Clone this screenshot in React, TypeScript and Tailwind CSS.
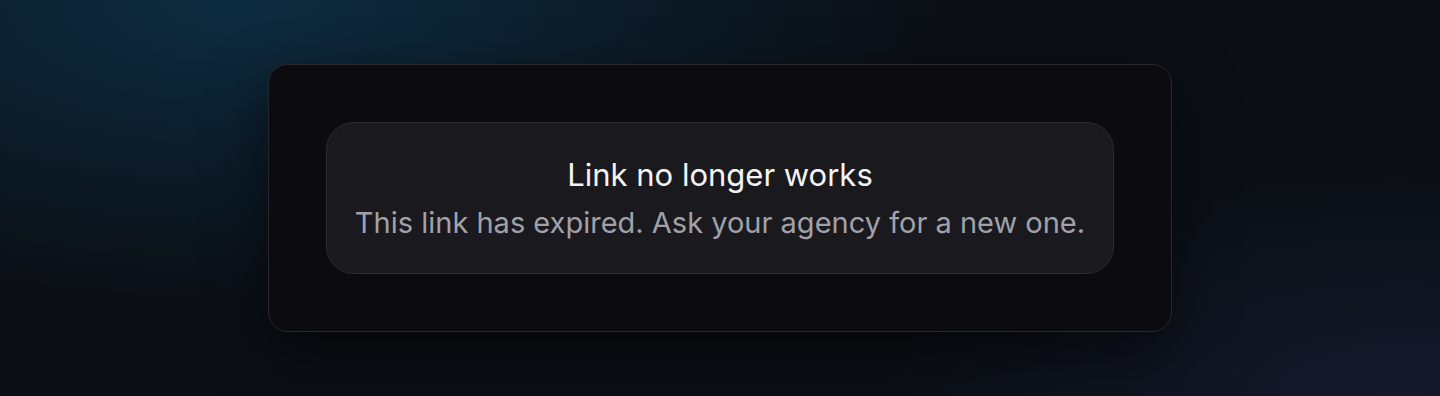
export default function App() {
  return (
    <div
      className="flex h-[396px] w-full items-center justify-center bg-[#0b0f15] bg-[radial-gradient(ellipse_700px_300px_at_240px_0px,#0e2d42_0%,rgba(13,43,63,0.55)_45%,transparent_100%),radial-gradient(ellipse_520px_220px_at_1400px_396px,#141a2c_0%,transparent_100%)]"
      style={{ fontFamily: "Inter, 'Noto Sans', sans-serif" }}
    >
      {/* Outer card */}
      <div className="rounded-[20px] border border-[#26262b] bg-[#0c0c10] p-[57px] shadow-[0_24px_60px_rgba(0,0,0,0.55)]">
        {/* Message box */}
        <div className="flex flex-col items-center rounded-[28px] border border-[#2c2c31] bg-[#1a1a1e] px-[28px] pt-[32px] pb-[30px] text-center">
          <h1 className="text-[31px] leading-[40px] font-normal text-[#f4f4f5]">Link no longer works</h1>
          <p className="mt-[8px] text-[29px] leading-[40px] text-[#a1a1aa]">
            This link has expired. Ask your agency for a new one.
          </p>
        </div>
      </div>
    </div>
  );
}
